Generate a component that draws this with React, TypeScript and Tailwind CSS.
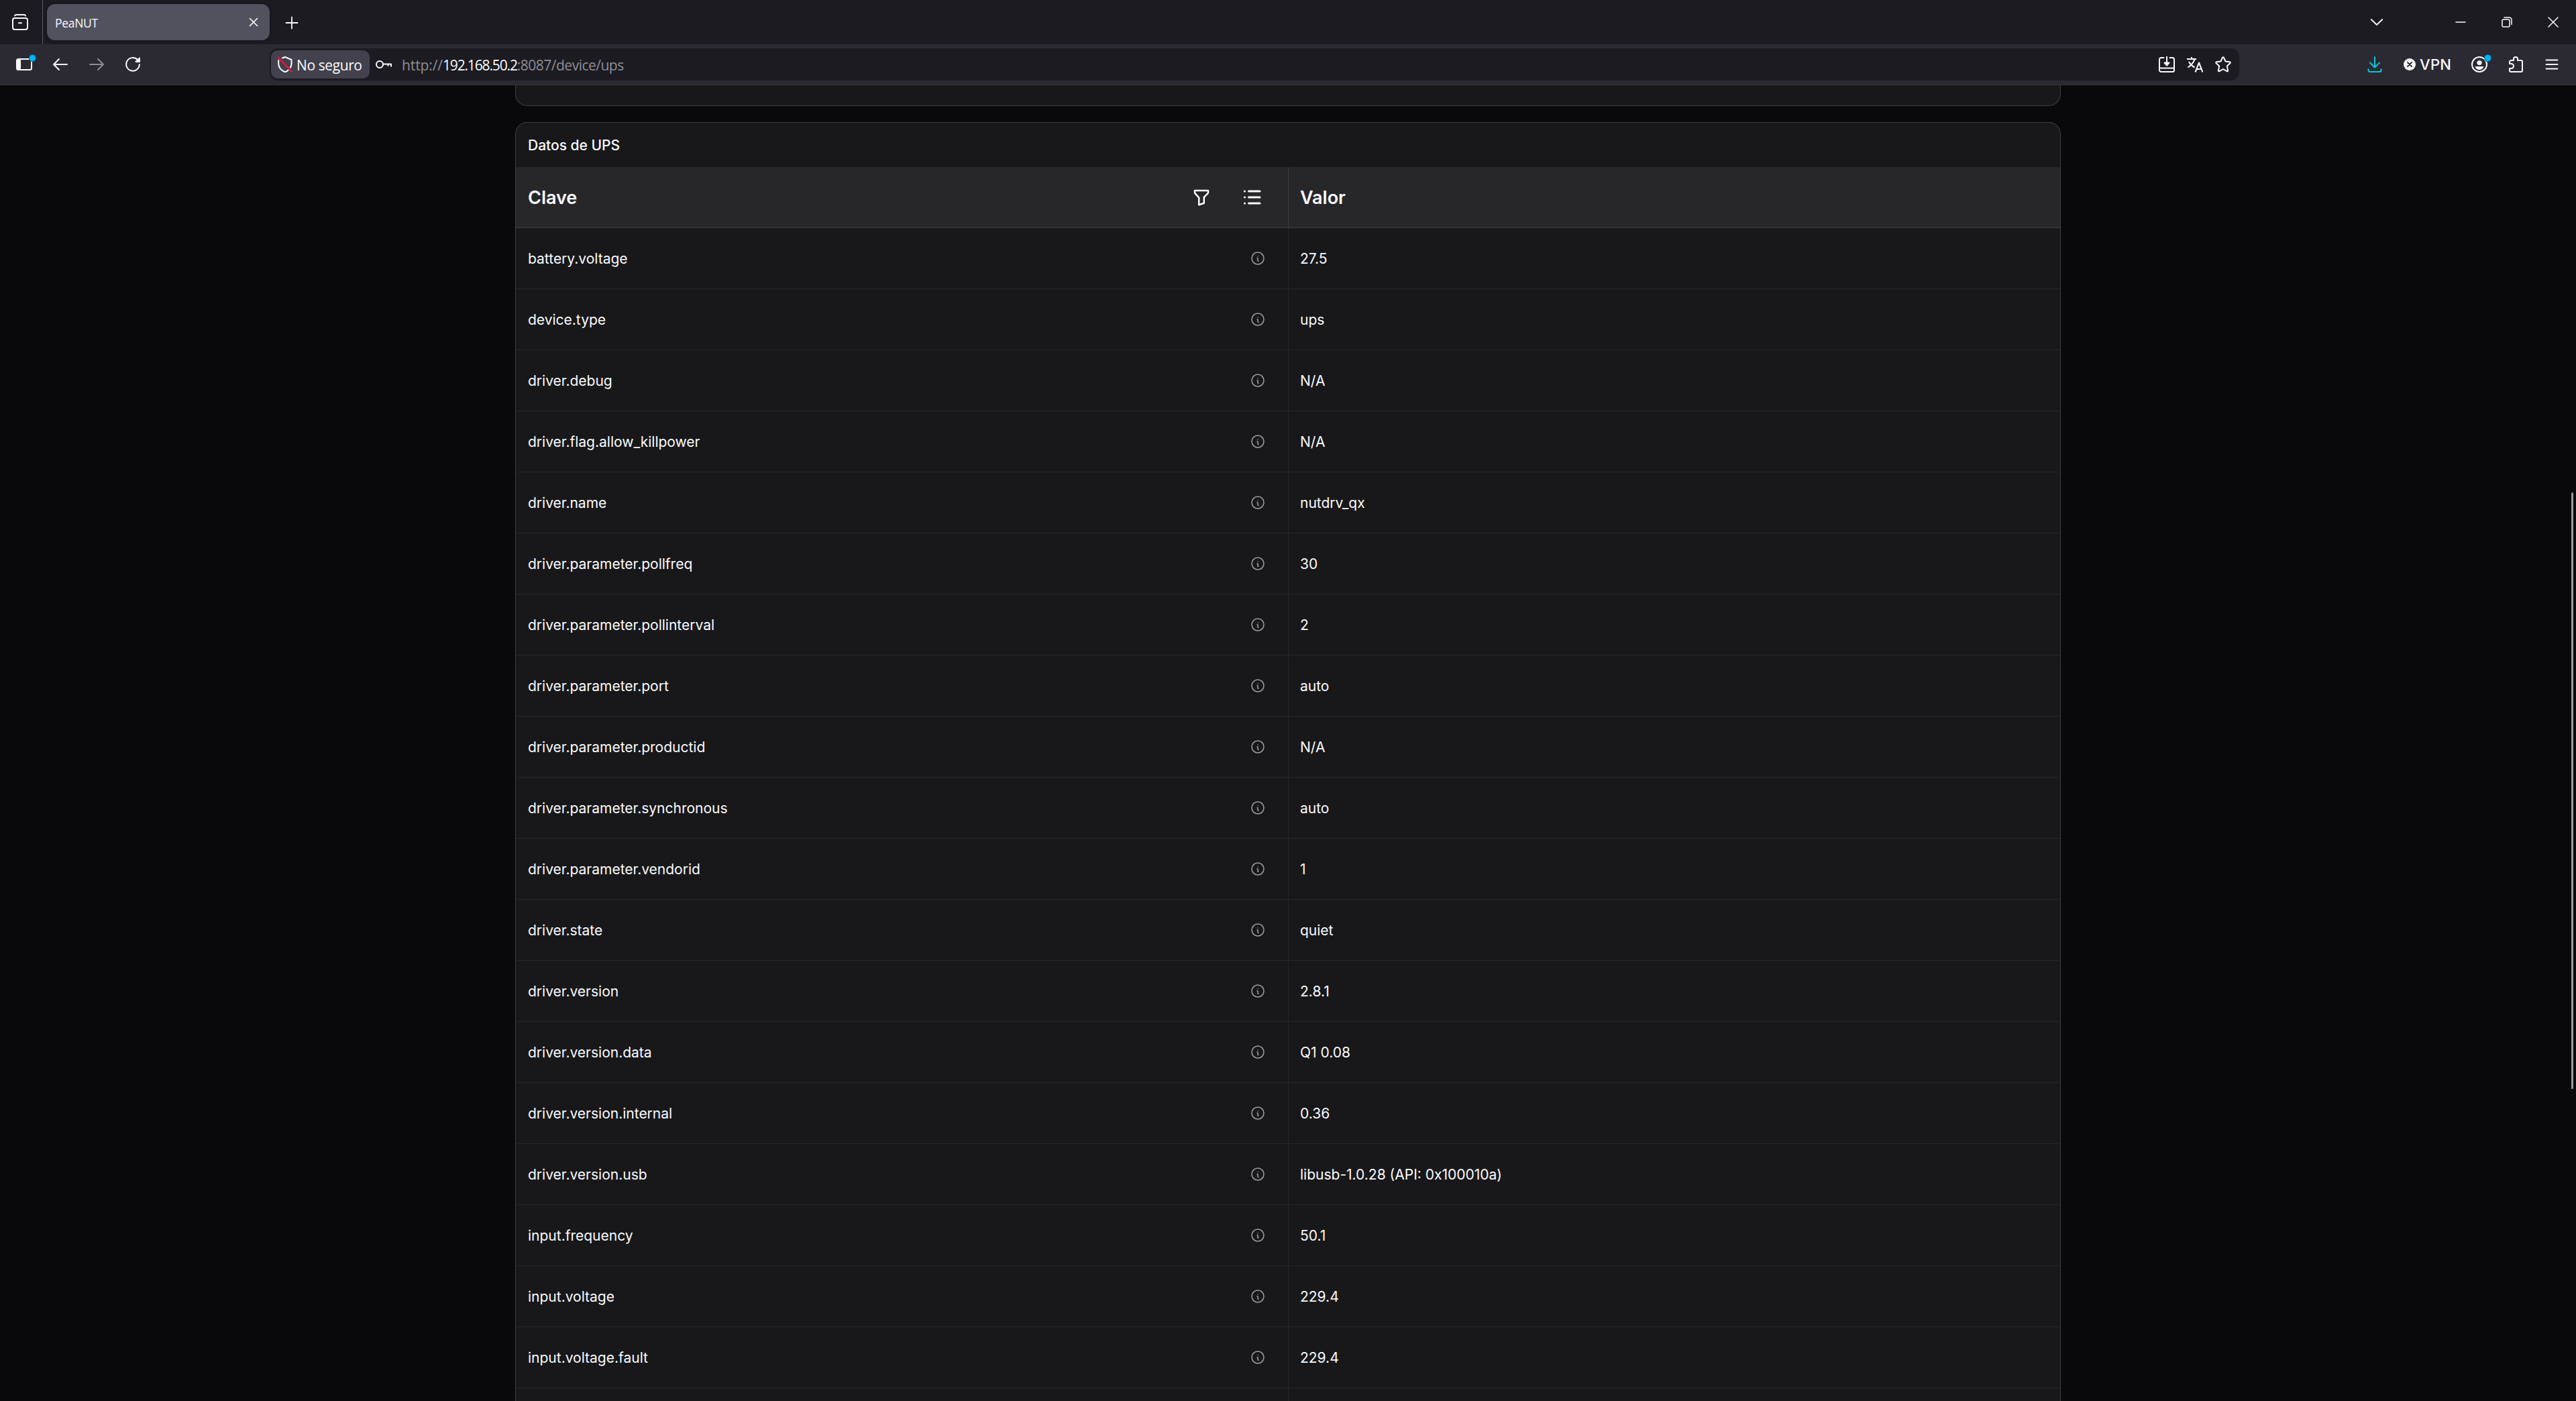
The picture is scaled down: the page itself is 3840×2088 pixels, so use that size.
import React from "react";
import { TbFilter, TbList, TbInfoCircle } from "react-icons/tb";

const rows: [string, string][] = [
  ["battery.voltage", "27.5"],
  ["device.type", "ups"],
  ["driver.debug", "N/A"],
  ["driver.flag.allow_killpower", "N/A"],
  ["driver.name", "nutdrv_qx"],
  ["driver.parameter.pollfreq", "30"],
  ["driver.parameter.pollinterval", "2"],
  ["driver.parameter.port", "auto"],
  ["driver.parameter.productid", "N/A"],
  ["driver.parameter.synchronous", "auto"],
  ["driver.parameter.vendorid", "1"],
  ["driver.state", "quiet"],
  ["driver.version", "2.8.1"],
  ["driver.version.data", "Q1 0.08"],
  ["driver.version.internal", "0.36"],
  ["driver.version.usb", "libusb-1.0.28 (API: 0x100010a)"],
  ["input.frequency", "50.1"],
  ["input.voltage", "229.4"],
  ["input.voltage.fault", "229.4"],
  ["", ""],
];

type IconProps = { size?: number; className?: string; sw?: number; children: React.ReactNode };

function Icon({ size = 24, className = "", sw = 2, children }: IconProps) {
  return (
    <svg
      width={size}
      height={size}
      viewBox={`0 0 ${size} ${size}`}
      fill="none"
      stroke="currentColor"
      strokeWidth={sw}
      strokeLinecap="round"
      strokeLinejoin="round"
      className={`shrink-0 ${className}`}
    >
      {children}
    </svg>
  );
}

function Cell({ className = "w-[54px]", children }: { className?: string; children?: React.ReactNode }) {
  return <div className={`relative flex h-full shrink-0 items-center justify-center ${className}`}>{children}</div>;
}

function Dot() {
  return <span className="absolute left-[35px] top-[16px] size-[9px] rounded-full bg-[#00b3f4] shadow-[0_0_0_1px_#0b6a94]" />;
}

function TabBar() {
  return (
    <div className="flex h-[66px] items-center bg-[#1c1b22]">
      <Cell className="w-[64px] border-r border-[#5b5a66] pr-[3px]">
        <Icon>
          <path d="M4 2.5c.3-1 1-1.500 2-1.500h12c1 0 1.700.5 2 1.500" />
          <rect x="1" y="6" width="22" height="17" rx="3" />
          <path d="M10 13.200h4" />
        </Icon>
      </Cell>
      <div className="ml-[6px] flex h-[54px] w-[332px] items-center justify-between rounded-[12px] bg-[#52525e] pl-[12px] pr-[16px] shadow-[0_0_4px_rgba(0,0,0,0.5)]">
        <span className="pt-px font-['Open_Sans','Noto_Sans',sans-serif] text-[17.500px] leading-[24px] tracking-[-0.3px]">PeaNUT</span>
        <Icon size={16} sw={1.700}>
          <path d="M2.500 2.500l11 11M13.500 2.500l-11 11" />
        </Icon>
      </div>
      <Cell className="w-[65px] pt-[2px]">
        <Icon size={20} sw={1.800}>
          <path d="M10 1.500v17M1.500 10h17" />
        </Icon>
      </Cell>
      <div className="flex-1" />
      <Cell className="w-[66px]">
        <Icon size={20} sw={1.800}>
          <path d="M1.800 6l8.200 8 8.200-8" />
        </Icon>
      </Cell>
      <Cell className="ml-[57px] w-[69px]">
        <Icon size={16} sw={1.600}>
          <path d="M1 8h14" />
        </Icon>
      </Cell>
      <Cell className="w-[69px]">
        <Icon size={16} sw={1.500}>
          <rect x="1" y="4" width="11" height="11" rx="2" />
          <path d="M4 1h7.500a3.500 3.500 0 0 1 3.500 3.500V11.500" />
        </Icon>
      </Cell>
      <Cell className="w-[69px]">
        <Icon size={16} sw={1.500}>
          <path d="M1 1l14 14M15 1L1 15" />
        </Icon>
      </Cell>
    </div>
  );
}

function UrlField() {
  return (
    <div className="ml-[177px] flex h-[48px] w-[2936px] items-center rounded-[12px] bg-[#1c1b22] pl-[2px] pr-[3px]">
      <div className="flex h-[42px] w-[147px] items-center rounded-[10px] bg-[#42414d] pl-[9px]">
        <Icon sw={2}>
          <path d="M8 2.500l4-1.500 9.500 4v5.500c0 2-.5 4-1.500 6M2.200 6v4.500c0 6 4 10.500 9.800 13 1.800-.8 3.300-1.700 4.600-3" />
          <path d="M1 1l21.500 22" stroke="#ff0f3f" strokeLinecap="butt" />
        </Icon>
        <span className="ml-[5px] whitespace-nowrap pt-[2px] font-['Open_Sans','Noto_Sans',sans-serif] text-[21px] leading-[30px] tracking-[-0.4px]">No seguro</span>
      </div>
      <Icon className="ml-[9px]">
        <circle cx="6" cy="12" r="5" />
        <path d="M11 11.500h12v4M18.500 11.500v3" strokeLinecap="butt" />
      </Icon>
      <span className="ml-[15px] flex-1 whitespace-nowrap pt-[2px] font-['Open_Sans','Noto_Sans',sans-serif] text-[21px] leading-[30px] tracking-[-0.5px] text-[#8f8e94]">
        <span className="tracking-[-0.1px]">http://</span>
        <span className="tracking-[-1.150px] text-[#fbfbfe]">192.168.50.2</span>:8087/device/ups
      </span>
      <Cell className="w-[42px]">
        <Icon>
          <path d="M7.500 2H3.500A2.500 2.500 0 0 0 1 4.500v16A2.500 2.500 0 0 0 3.500 23h17a2.500 2.500 0 0 0 2.500-2.500v-16A2.500 2.500 0 0 0 20.500 2h-4M1 17.500h22M12 0v11" />
          <path d="M8.500 9.500h7L12 13.500z" fill="currentColor" />
        </Icon>
      </Cell>
      <Cell className="w-[42px]">
        <Icon sw={2.100}>
          <path d="M0 4h14M7 1v3M11.500 4.500C10 9 6 13.500 1.500 16.500M3 8c1.800 3.500 5 6.500 8.500 8.500" strokeLinecap="butt" />
          <path d="M12.500 23.500L18 9.500l5.500 14M14.500 19h7" strokeLinecap="butt" />
        </Icon>
      </Cell>
      <Cell className="w-[42px]">
        <Icon>
          <path d="M11.100 1.700a1 1 0 0 1 1.800 0l2.700 5.800 6.300.8a1 1 0 0 1 .6 1.700l-4.700 4.400 1.300 6.700a1 1 0 0 1-1.500 1.100L12 19l-5.600 3.200a1 1 0 0 1-1.500-1.100l1.300-6.700L1.500 10a1 1 0 0 1 .6-1.700l6.300-.8z" />
        </Icon>
      </Cell>
    </div>
  );
}

function Toolbar() {
  return (
    <div className="flex h-[61px] items-center border-b border-[#38373f] bg-[#2b2a33] pl-[9px] pr-[9px]">
      <Cell>
        <Icon>
          <rect x="1" y="4" width="22" height="16" rx="2.500" />
          <path d="M2 5h4v14H2z" fill="currentColor" />
        </Icon>
        <Dot />
      </Cell>
      <Cell>
        <Icon>
          <path d="M10 4L2 12l8 8M2 12h20" />
        </Icon>
      </Cell>
      <Cell className="w-[54px] text-[#8e8d94]">
        <Icon>
          <path d="M14 4l8 8-8 8M22 12H2" />
        </Icon>
      </Cell>
      <Cell>
        <Icon>
          <path d="M21.800 12A9.800 9.800 0 1 1 19 5" />
          <path d="M22 2.500V8h-5.500z" fill="currentColor" />
        </Icon>
      </Cell>
      <UrlField />
      <div className="flex-1" />
      <Cell className="w-[54px] pl-px">
        <Icon className="text-[#00c8d7]">
          <path d="M12 1v15M5 9.500l7 7 7-7M2.500 19v1.500A2.500 2.500 0 0 0 5 23h14a2.500 2.500 0 0 0 2.500-2.500V19" />
        </Icon>
      </Cell>
      <Cell className="w-[103px] justify-start pl-[17px]">
        <Icon size={18} sw={2}>
          <circle cx="9" cy="9" r="9" fill="currentColor" stroke="none" />
          <path d="M6 6l6 6M12 6l-6 6" stroke="#2b2a33" />
        </Icon>
        <span className="ml-[6px] font-['Inter',sans-serif] text-[22px] font-medium leading-[30px] tracking-[0.3px]">VPN</span>
      </Cell>
      <Cell>
        <Icon>
          <circle cx="12" cy="12" r="11" />
          <circle cx="12" cy="9.500" r="3.600" fill="currentColor" stroke="none" />
          <path d="M5.500 15h13c-1 3.500-3.500 5-6.500 5s-5.500-1.500-6.500-5z" fill="currentColor" stroke="none" />
        </Icon>
        <Dot />
      </Cell>
      <Cell>
        <Icon>
          <path d="M3 10V8.500A2.500 2.500 0 0 1 5.500 6H9V4a3 3 0 0 1 6 0v2h5a2 2 0 0 1 2 2v13a2 2 0 0 1-2 2H5a2 2 0 0 1-2-2v-3h2.500a3.500 3.500 0 0 0 0-7H3z" />
        </Icon>
      </Cell>
      <Cell>
        <Icon size={20} sw={1.800}>
          <path d="M1.500 3.500h17M1.500 10h17M1.500 16.500h17" />
        </Icon>
      </Cell>
    </div>
  );
}

export default function App() {
  return (
    <div className="flex h-[2088px] w-[3840px] flex-col overflow-hidden bg-[#09090b] font-['Inter',sans-serif] text-[#fbfbfe]">
      <TabBar />
      <Toolbar />
      <main className="relative flex min-h-0 flex-1 flex-col items-center gap-[24px] overflow-hidden">
        <section className="h-[31px] w-[2304px] shrink-0 rounded-b-[18px] border border-t-0 border-[#3f3f42] bg-[#18181a]" />
        <section className="w-[2304px] shrink-0 overflow-hidden rounded-t-[18px] border border-b-0 border-[#3f3f42] bg-[#18181a]">
          <h2 className="h-[66px] pl-[18px] pt-[18px] text-[21px] font-medium leading-[32px]">Datos de UPS</h2>
          <div className="flex h-[91px] border-b border-[#3f3f42] bg-[#27272a] text-[27px] font-semibold">
            <div className="flex w-[1152px] items-center border-r border-[#3f3f42] pl-[18px] pr-[36px]">
              <span className="flex-1 pt-[2px]">Clave</span>
              <TbFilter size={30} />
              <TbList size={36} className="ml-[42px]" />
            </div>
            <div className="flex flex-1 items-center pl-[17px] pt-[2px]">Valor</div>
          </div>
          {rows.map(([key, value], i) => (
            <div key={i} className="flex h-[91px] border-b border-[#27272a] text-[21px]">
              <div className="flex w-[1152px] items-center border-r border-[#27272a] pl-[18px] pr-[33px]">
                <span className="flex-1 pt-[2px]">{key}</span>
                <TbInfoCircle size={24} strokeWidth={1.500} className="text-[#9f9fa9]" />
              </div>
              <div className="flex flex-1 items-center pl-[17px] pt-[2px]">{value}</div>
            </div>
          ))}
        </section>
        <span className="absolute right-[4px] top-[607px] h-[889px] w-[3px] rounded-full bg-[#9b9b9b]" />
      </main>
    </div>
  );
}
